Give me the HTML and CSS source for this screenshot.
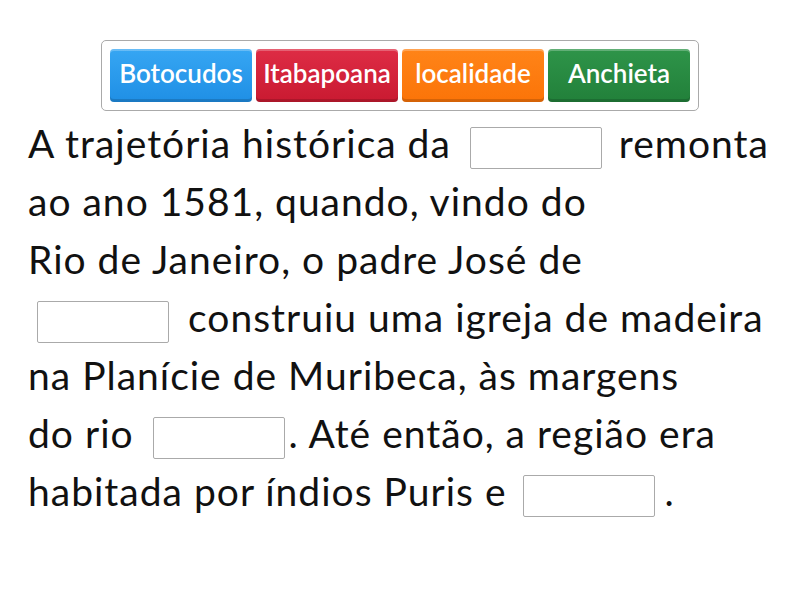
FILE: index.html
```html
<!DOCTYPE html>
<html lang="pt">
<head>
    <meta charset="UTF-8">
    <meta name="viewport" content="width=device-width, initial-scale=1.0">
    <title>Complete a frase</title>
    <link rel="stylesheet" href="styles.css">
</head>
<body>

<div class="word-bank">
    <button class="word blue">Botocudos</button>
    <button class="word red">Itabapoana</button>
    <button class="word orange">localidade</button>
    <button class="word green">Anchieta</button>
</div>

<div class="passage">
    <div class="line">A trajetória histórica da<span class="blank"></span>remonta</div>
    <div class="line">ao ano 1581, quando, vindo do</div>
    <div class="line">Rio de Janeiro, o padre José de</div>
    <div class="line"><span class="blank first"></span>construiu uma igreja de madeira</div>
    <div class="line">na Planície de Muribeca, às margens</div>
    <div class="line">do rio<span class="blank end"></span>. Até então, a região era</div>
    <div class="line">habitada por índios Puris e<span class="blank last"></span>.</div>
</div>

</body>
</html>
```

FILE: styles.css
```css
body {
    margin: 0;
    font-family: 'Lato', 'Open Sans', sans-serif;
    color: #111;
    background: #fff;
}
.word-bank {
    display: flex;
    gap: 4px;
    width: fit-content;
    margin: 40px auto 0;
    padding: 8px;
    border: 1px solid #aaa;
    border-radius: 5px;
}
.word {
    width: 142px;
    height: 53px;
    border: none;
    border-radius: 4px;
    color: white;
    font-family: 'Lato', sans-serif;
    font-size: 26px;
    font-weight: 600;
    padding: 0 0 5px;
    cursor: pointer;
    box-shadow: inset 0 2px 0 rgba(255, 255, 255, 0.25), inset 0 -3px 0 rgba(0, 0, 0, 0.15);
}
.blue {
    background: linear-gradient(#36a6f3, #1f8fe5);
}
.red {
    background: linear-gradient(#de2c45, #c91a31);
}
.orange {
    background: linear-gradient(#ff8418, #fb7408);
}
.green {
    background: linear-gradient(#2e9449, #22803a);
}
.passage {
    margin-top: 3px;
    padding-left: 28px;
    font-size: 39px;
    line-height: 58px;
    letter-spacing: 1px;
}
.line {
    white-space: nowrap;
}
.blank {
    display: inline-block;
    width: 132px;
    height: 42px;
    box-sizing: border-box;
    margin: 0 17px 0 19px;
    border: 1px solid #aaa;
    border-radius: 2px;
    vertical-align: -11px;
}
.blank.first {
    margin-left: 9px;
    margin-right: 19px;
}
.blank.end {
    margin: 0 4px 0 19px;
}
.blank.last {
    margin: 0 10px 0 16px;
}
```
